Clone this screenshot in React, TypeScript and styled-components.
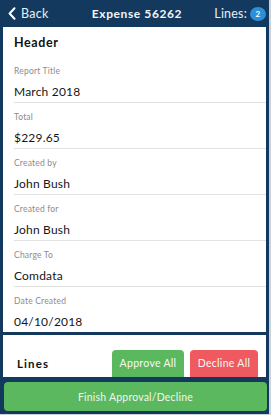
import React from "react";
import styled, { createGlobalStyle } from "styled-components";

const NAVY = "#133a5e";

const GlobalStyle = createGlobalStyle`
  html, body { margin: 0; padding: 0; background: #cdd3d9; }
  * { box-sizing: border-box; }
  body { font-family: "Lato", "Open Sans", sans-serif; }
`;

const Frame = styled.div`
  width: 271px;
  height: 415px;
  background: ${NAVY};
  border-right: 2px solid #cdd3d9;
  border-bottom: 1px solid #cdd3d9;
  display: flex;
  flex-direction: column;
  overflow: hidden;
`;

const TopBar = styled.div`
  height: 27px;
  flex: none;
  display: grid;
  grid-template-columns: 1fr auto 1fr;
  align-items: center;
  padding: 0 3px 0 8px;
  color: #ffffff;
`;

const BackButton = styled.div`
  display: flex;
  align-items: center;
  gap: 5px;
  font-size: 12.5px;
  letter-spacing: 0.3px;
  color: #e8eef4;
`;

const Title = styled.div`
  font-size: 12px;
  font-weight: 700;
  letter-spacing: 0.6px;
  color: #f2f5f8;
`;

const LinesCount = styled.div`
  justify-self: end;
  display: flex;
  align-items: center;
  gap: 3px;
  font-size: 12.5px;
  letter-spacing: 0.2px;
  color: #e8eef4;
`;

const Badge = styled.span`
  display: inline-flex;
  align-items: center;
  justify-content: center;
  width: 16px;
  height: 14px;
  border-radius: 50%;
  background: #2c8fd9;
  color: #ffffff;
  font-size: 8px;
  font-weight: 700;
`;

const Content = styled.div`
  flex: 1;
  min-height: 0;
  overflow: hidden;
  display: flex;
  flex-direction: column;
  gap: 3px;
  padding: 0 3px 0 3px;
`;

const Card = styled.div`
  flex: none;
  background: #ffffff;
  padding-left: 11px;
`;

const SectionTitle = styled.div`
  padding-top: 7px;
  height: 30px;
  line-height: 18px;
  font-size: 12.5px;
  font-weight: 700;
  letter-spacing: 0.6px;
  color: #111111;
`;

const Row = styled.div<{ $last?: boolean }>`
  padding: 8px 0 2px;
  border-bottom: ${(p) => (p.$last ? "none" : "1px solid #e3e3e3")};
  display: flex;
  flex-direction: column;
  gap: 7px;
`;

const Label = styled.div`
  font-size: 8.5px;
  line-height: 12px;
  letter-spacing: 0.2px;
  color: #8c8c8c;
`;

const Value = styled.div`
  font-size: 12px;
  line-height: 16px;
  color: #161616;
  letter-spacing: 0.2px;
`;

const LinesSection = styled.div`
  flex: none;
  height: 52px;
  background: #ffffff;
  display: flex;
  align-items: flex-start;
  padding: 15px 8px 0 14px;
`;

const LinesTitle = styled.div`
  flex: 1;
  padding-top: 7px;
  font-size: 11.5px;
  font-weight: 700;
  letter-spacing: 1.1px;
  color: #111111;
`;

const ActionButton = styled.button<{ $variant: "approve" | "decline" }>`
  border: none;
  border-radius: 4px;
  height: 30px;
  width: ${(p) => (p.$variant === "approve" ? "72px" : "68px")};
  margin-left: 6px;
  background: ${(p) => (p.$variant === "approve" ? "#5cb85f" : "#ee5a60")};
  color: #f4faf4;
  font-family: inherit;
  font-size: 10.5px;
  letter-spacing: 0.3px;
  padding: 0 0 4px;
`;

const BottomBar = styled.div`
  flex: none;
  height: 37px;
  padding: 5px 2px 3px 4px;
`;

const FinishButton = styled.button`
  width: 100%;
  height: 29px;
  border: none;
  border-radius: 4px;
  background: #5cb85f;
  color: #eef7ee;
  font-family: inherit;
  font-size: 10.5px;
  letter-spacing: 0.2px;
`;

const fields = [
  { label: "Report Title", value: "March 2018" },
  { label: "Total", value: "$229.65" },
  { label: "Created by", value: "John Bush" },
  { label: "Created for", value: "John Bush" },
  { label: "Charge To", value: "Comdata" },
  { label: "Date Created", value: "04/10/2018" },
];

export default function App() {
  return (
    <>
      <GlobalStyle />
      <Frame>
        <TopBar>
          <BackButton>
            <svg width="8" height="13" viewBox="0 0 8 13">
              <path d="M6.5 1.2 L1.6 6.5 L6.5 11.8" fill="none" stroke="#ffffff" strokeWidth="2" strokeLinecap="round" strokeLinejoin="round" />
            </svg>
            Back
          </BackButton>
          <Title>Expense 56262</Title>
          <LinesCount>
            Lines: <Badge>2</Badge>
          </LinesCount>
        </TopBar>
        <Content>
          <Card>
            <SectionTitle>Header</SectionTitle>
            {fields.map((f, i) => (
              <Row key={f.label} $last={i === fields.length - 1}>
                <Label>{f.label}</Label>
                <Value>{f.value}</Value>
              </Row>
            ))}
          </Card>
          <LinesSection>
            <LinesTitle>Lines</LinesTitle>
            <ActionButton $variant="approve">Approve All</ActionButton>
            <ActionButton $variant="decline">Decline All</ActionButton>
          </LinesSection>
        </Content>
        <BottomBar>
          <FinishButton>Finish Approval/Decline</FinishButton>
        </BottomBar>
      </Frame>
    </>
  );
}
